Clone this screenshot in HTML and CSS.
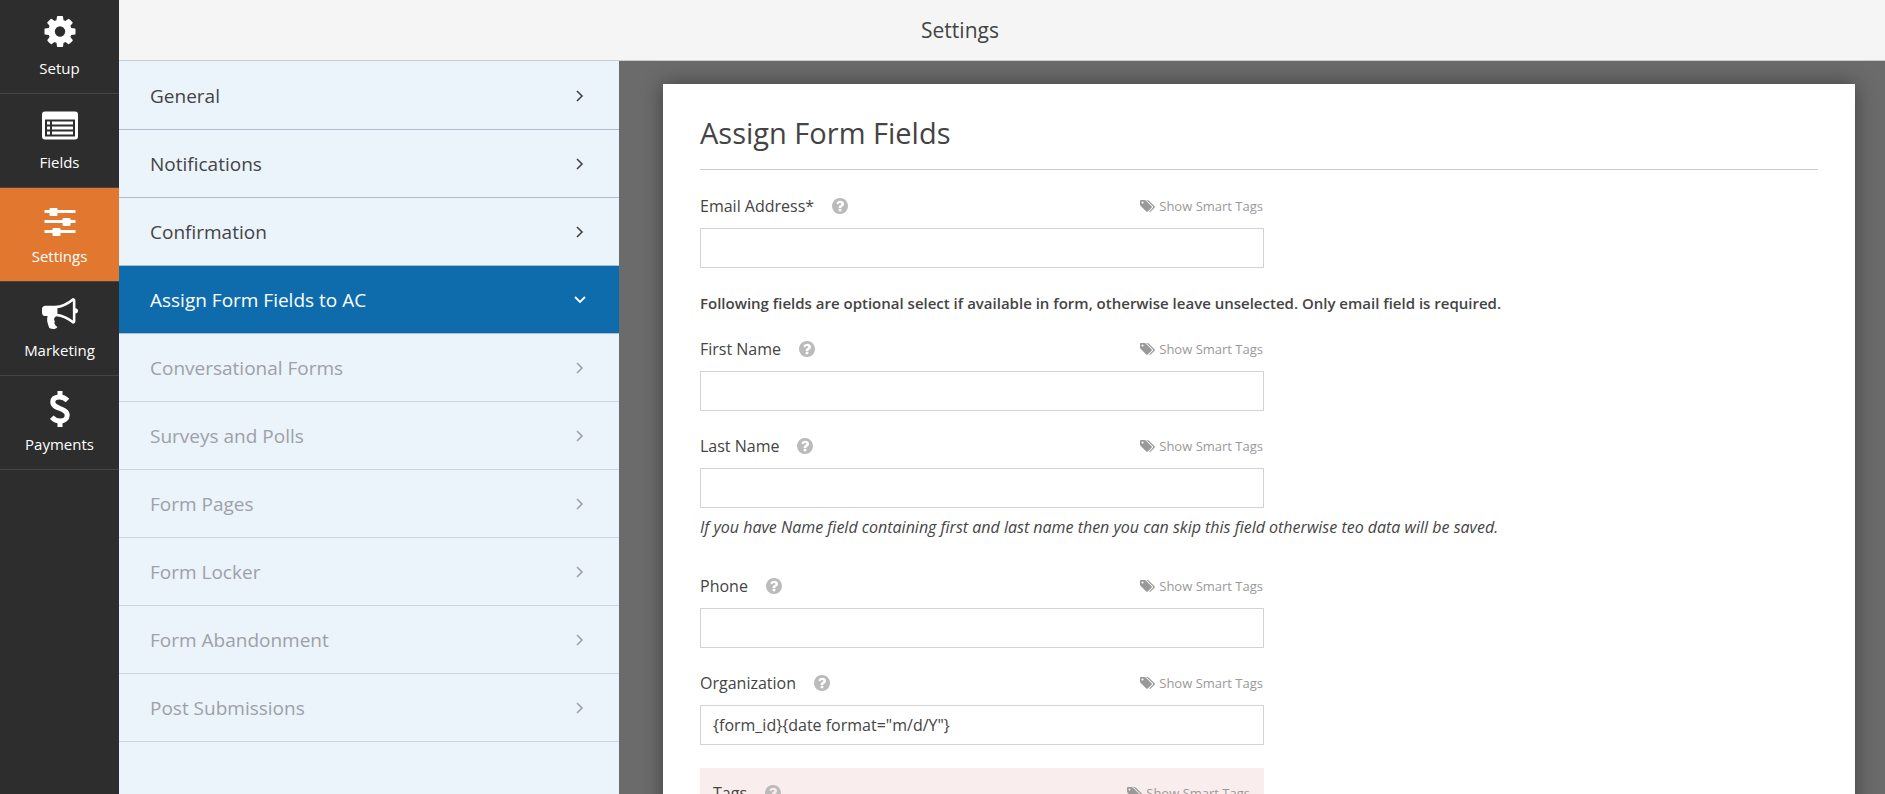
FILE: index.html
```html
<!DOCTYPE html>
<html lang="en">
<head>
<meta charset="utf-8">
<title>Settings</title>
<link rel="stylesheet" href="styles.css">
</head>
<body>
<svg class="sprite" aria-hidden="true">
  <symbol id="cog" viewBox="128 128 1536 1536"><path d="M1152 896q0-106-75-181t-181-75-181 75-75 181 75 181 181 75 181-75 75-181zm512-109v222q0 12-8 23t-20 13l-185 28q-19 54-39 91 35 50 107 138 10 12 10 25t-9 23q-27 37-99 108t-94 71q-12 0-26-9l-138-108q-44 23-91 38-16 136-29 186-7 28-36 28h-222q-14 0-24.5-8.5t-11.5-21.5l-28-184q-49-16-90-37l-141 107q-10 9-25 9-14 0-25-11-126-114-165-168-7-10-7-23 0-12 8-23 15-21 51-66.5t54-70.5q-27-50-41-99l-183-27q-13-2-21-12.5t-8-23.5v-222q0-12 8-23t19-13l186-28q14-46 39-92-40-57-107-138-10-12-10-24 0-10 9-23 26-36 98.5-107.5t94.5-71.5q13 0 26 10l138 107q44-23 91-38 16-136 29-186 7-28 36-28h222q14 0 24.5 8.5t11.5 21.5l28 184q49 16 90 37l142-107q9-9 24-9 13 0 25 10 129 119 165 170 7 8 7 22 0 12-8 23-15 21-51 66.5t-54 70.5q26 50 41 98l183 28q13 2 21 12.5t8 23.5z"/></symbol>
  <symbol id="list" viewBox="0 0 36 28"><path fill-rule="evenodd" d="M3 0h30a3 3 0 0 1 3 3v22a3 3 0 0 1-3 3H3a3 3 0 0 1-3-3V3a3 3 0 0 1 3-3zM3 8v17h30V8z"/><path d="M5 10h3v3H5zm5 0h21v3H10zM5 15h3v3H5zm5 0h21v3H10zM5 20h3v3H5zm5 0h21v3H10z"/></symbol>
  <symbol id="sliders" viewBox="0 0 31 28"><path d="M0 2h31v3H0zM0 12h31v3H0zM0 22h31v3H0z"/><rect x="5" width="8" height="8" rx="1"/><rect x="18" y="10" width="8" height="8" rx="1"/><rect x="8" y="20" width="8" height="8" rx="1"/></symbol>
  <symbol id="horn" viewBox="0 128 1792 1536"><path d="M1664 640q53 0 90.5 37.5t37.5 90.5-37.5 90.5-90.5 37.5v384q0 52-38 90t-90 38q-417-347-812-380-58 19-91 66t-31 100.5 40 92.5q-20 33-23 65.5t6 58 33.5 55 48 50 61.5 50.5q-29 58-111.5 83t-168.5 11.5-132-55.5q-7-23-29.5-87.5t-32-94.5-23-89-15-101 3.5-98.5 22-110.5h-122q-66 0-113-47t-47-113v-192q0-66 47-113t113-47h480q435 0 896-384 52 0 90 38t38 90v384zm-128 604v-954q-394 302-768 343v270q377 42 768 341z"/></symbol>
  <symbol id="coin" viewBox="0 0 20 36"><path d="M10 0v6M10 30v6" fill="none" stroke="currentColor" stroke-width="5"/><path d="M17.500 9.500C15 7 12 5.800 9 6 5 6.200 2.800 8.200 2.800 11c0 7.500 14.400 5.500 14.400 13.200 0 3.400-3 5.800-7 5.800-3.400 0-6-1.300-8.500-3.800" fill="none" stroke="currentColor" stroke-width="5"/></symbol>
  <symbol id="help" viewBox="128 128 1536 1536"><path d="M1024 1376v-192q0-14-9-23t-23-9h-192q-14 0-23 9t-9 23v192q0 14 9 23t23 9h192q14 0 23-9t9-23zm256-672q0-88-55.500-163t-138.500-116-170-41q-243 0-371 213-15 24 8 42l132 100q7 6 19 6 16 0 25-12 53-68 86-92 34-24 86-24 48 0 85.500 26t37.500 59q0 38-20 61t-68 45q-63 28-115.500 86.500t-52.500 125.500v36q0 14 9 23t23 9h192q14 0 23-9t9-23q0-19 21.500-49.500t54.500-49.500q32-18 49-28.500t46-35 44.500-48 28-60.500 12.500-81zm384 192q0 209-103 385.500t-279.500 279.500-385.500 103-385.500-103-279.500-279.500-103-385.500 103-385.500 279.500-279.500 385.500-103 385.500 103 279.500 279.500 103 385.500z"/></symbol>
  <symbol id="tags" viewBox="0 128 1920 1536"><path d="M448 448q0-53-37.500-90.500t-90.500-37.500-90.500 37.500-37.500 90.500 37.500 90.500 90.500 37.500 90.500-37.500 37.500-90.500zm1067 576q0 53-37 90l-491 492q-39 37-91 37-53 0-90-37l-715-716q-38-37-64.500-101t-26.500-117v-416q0-52 38-90t90-38h416q53 0 117 26.500t102 64.500l715 714q37 39 37 91zm384 0q0 53-37 90l-491 492q-39 37-91 37-36 0-59-14t-53-45l470-470q37-37 37-90 0-52-37-91l-715-714q-38-38-102-64.500t-117-26.500h224q53 0 117 26.500t102 64.500l715 714q37 39 37 91z"/></symbol>
  <symbol id="right" viewBox="0 0 12 12"><path d="M3 1l5 5-5 5" fill="none" stroke="currentColor" stroke-width="1.600"/></symbol>
  <symbol id="down" viewBox="0 0 12 12"><path d="M1 3l5 5 5-5" fill="none" stroke="currentColor" stroke-width="1.800"/></symbol>
</svg>
<div class="app">
  <nav class="rail" aria-label="Builder">
    <button class="rail-item"><svg class="rail-icon"><use href="#cog"/></svg>Setup</button>
    <button class="rail-item"><svg class="rail-icon"><use href="#list"/></svg>Fields</button>
    <button class="rail-item is-active"><svg class="rail-icon rail-icon-low"><use href="#sliders"/></svg>Settings</button>
    <button class="rail-item"><svg class="rail-icon"><use href="#horn"/></svg>Marketing</button>
    <button class="rail-item"><svg class="rail-icon rail-icon-tall"><use href="#coin"/></svg>Payments</button>
  </nav>
  <div class="main">
    <header class="topbar"><h1 class="topbar-title">Settings</h1></header>
    <div class="body">
      <nav class="sections" aria-label="Settings sections">
        <a class="section" href="#general">General<svg class="arrow"><use href="#right"/></svg></a>
        <a class="section" href="#notifications">Notifications<svg class="arrow"><use href="#right"/></svg></a>
        <a class="section" href="#confirmation">Confirmation<svg class="arrow"><use href="#right"/></svg></a>
        <a class="section is-active" href="#assign">Assign Form Fields to AC<svg class="arrow"><use href="#down"/></svg></a>
        <a class="section is-muted" href="#conversational">Conversational Forms<svg class="arrow"><use href="#right"/></svg></a>
        <a class="section is-muted" href="#surveys">Surveys and Polls<svg class="arrow"><use href="#right"/></svg></a>
        <a class="section is-muted" href="#pages">Form Pages<svg class="arrow"><use href="#right"/></svg></a>
        <a class="section is-muted" href="#locker">Form Locker<svg class="arrow"><use href="#right"/></svg></a>
        <a class="section is-muted" href="#abandonment">Form Abandonment<svg class="arrow"><use href="#right"/></svg></a>
        <a class="section is-muted" href="#post">Post Submissions<svg class="arrow"><use href="#right"/></svg></a>
      </nav>
      <main class="stage">
        <form class="card">
          <h2 class="card-title">Assign Form Fields</h2>
          <div class="field">
            <div class="field-head"><label for="email">Email Address*</label><svg class="help"><use href="#help"/></svg><a class="smart" href="#tags-email"><svg class="tags"><use href="#tags"/></svg>Show Smart Tags</a></div>
            <input class="field-input" id="email" type="text">
          </div>
          <p class="notice">Following fields are optional select if available in form, otherwise leave unselected. Only email field is required.</p>
          <div class="field">
            <div class="field-head"><label for="first">First Name</label><svg class="help"><use href="#help"/></svg><a class="smart" href="#tags-first"><svg class="tags"><use href="#tags"/></svg>Show Smart Tags</a></div>
            <input class="field-input" id="first" type="text">
          </div>
          <div class="field">
            <div class="field-head"><label for="last">Last Name</label><svg class="help"><use href="#help"/></svg><a class="smart" href="#tags-last"><svg class="tags"><use href="#tags"/></svg>Show Smart Tags</a></div>
            <input class="field-input" id="last" type="text">
          </div>
          <p class="hint">If you have Name field containing first and last name then you can skip this field otherwise teo data will be saved.</p>
          <div class="field">
            <div class="field-head"><label for="phone">Phone</label><svg class="help"><use href="#help"/></svg><a class="smart" href="#tags-phone"><svg class="tags"><use href="#tags"/></svg>Show Smart Tags</a></div>
            <input class="field-input" id="phone" type="text">
          </div>
          <div class="field">
            <div class="field-head"><label for="org">Organization</label><svg class="help"><use href="#help"/></svg><a class="smart" href="#tags-org"><svg class="tags"><use href="#tags"/></svg>Show Smart Tags</a></div>
            <input class="field-input" id="org" type="text" value="{form_id}{date format=&quot;m/d/Y&quot;}">
          </div>
          <div class="field field-alert">
            <div class="field-head"><label for="tagbox">Tags</label><svg class="help"><use href="#help"/></svg><a class="smart" href="#tags-tags"><svg class="tags"><use href="#tags"/></svg>Show Smart Tags</a></div>
            <input class="field-input" id="tagbox" type="text">
          </div>
        </form>
      </main>
    </div>
  </div>
</div>
</body>
</html>
```
FILE: styles.css
```css
* { box-sizing: border-box; }

body {
  margin: 0;
  color: #444;
  font-family: "Segoe UI", "Open Sans", "Noto Sans", sans-serif;
  font-size: 16px;
}

svg { fill: currentColor; flex: none; }

.sprite { display: none; }

.app { display: flex; height: 100vh; overflow: hidden; }

.rail { flex: none; width: 119px; background: #2d2d2d; }

.rail-item {
  display: flex;
  flex-direction: column;
  align-items: center;
  justify-content: space-between;
  width: 100%;
  height: 94px;
  padding: 13px 0;
  border: 0;
  border-bottom: 1px solid #444;
  background: none;
  color: #fff;
  font: inherit;
  font-size: 15px;
  line-height: 24px;
}

.rail-item.is-active { background: #e27730; }

.rail-icon { width: 36px; height: 31px; margin-top: 3px; }
.rail-icon-low { height: 28px; margin-top: 7px; }
.rail-icon-tall { margin-top: 2px; height: 36px; }

.main { display: flex; flex: 1; flex-direction: column; min-width: 0; }

.topbar {
  flex: none;
  padding: 15px 84px 15px 0;
  border-bottom: 1px solid #ccc;
  background: #f5f5f5;
  text-align: center;
}

.topbar-title { margin: 0; font-size: 21px; font-weight: 400; line-height: 30px; }

.body { display: flex; flex: 1; min-height: 0; }

.sections {
  flex: none;
  width: 500px;
  padding-top: 1px;
  background: #ebf3fb;
}

.section {
  display: flex;
  align-items: center;
  justify-content: space-between;
  height: 68px;
  padding: 0 33px 0 31px;
  border-bottom: 1px solid #b0bccb;
  color: #444;
  font-size: 19px;
  text-decoration: none;
}

.section.is-active { background: #0e6cad; color: #fff; }
.section.is-muted { border-color: #cad4e2; color: #9da1a8; }

.arrow { width: 12px; height: 12px; }

.stage {
  flex: 1;
  min-width: 0;
  padding: 23px 30px 0 44px;
  overflow: hidden;
  background: #6b6b6b;
}

.card {
  min-height: 100%;
  padding: 29px 37px;
  background: #fff;
  box-shadow: 0 0 20px rgba(0, 0, 0, 0.4);
}

.card-title {
  margin: 0 0 24px;
  padding-bottom: 16px;
  border-bottom: 1px solid #ccc;
  font-size: 29px;
  font-weight: 400;
  line-height: 40px;
}

.field { max-width: 564px; margin-bottom: 23px; }

.field-head {
  display: flex;
  align-items: center;
  margin-bottom: 10px;
  line-height: 24px;
}

.help { width: 16px; height: 16px; margin-left: 18px; color: #bbb; }

.smart {
  display: flex;
  align-items: center;
  gap: 4px;
  margin-left: auto;
  padding-right: 1px;
  color: #999;
  font-size: 13px;
  text-decoration: none;
}

.tags { width: 15px; height: 12px; }

.field-input {
  display: block;
  width: 100%;
  height: 40px;
  padding: 0 12px;
  border: 1px solid #d3d3d3;
  background: #fff;
  color: #444;
  font: inherit;
}

.notice,
.hint { line-height: 24px; }

.notice { margin: 0 0 22px; font-size: 15px; font-weight: 600; }
.hint { margin: -16px 0 35px; font-style: italic; }

.field-alert { padding: 13px; background: #f9eded; }
```
